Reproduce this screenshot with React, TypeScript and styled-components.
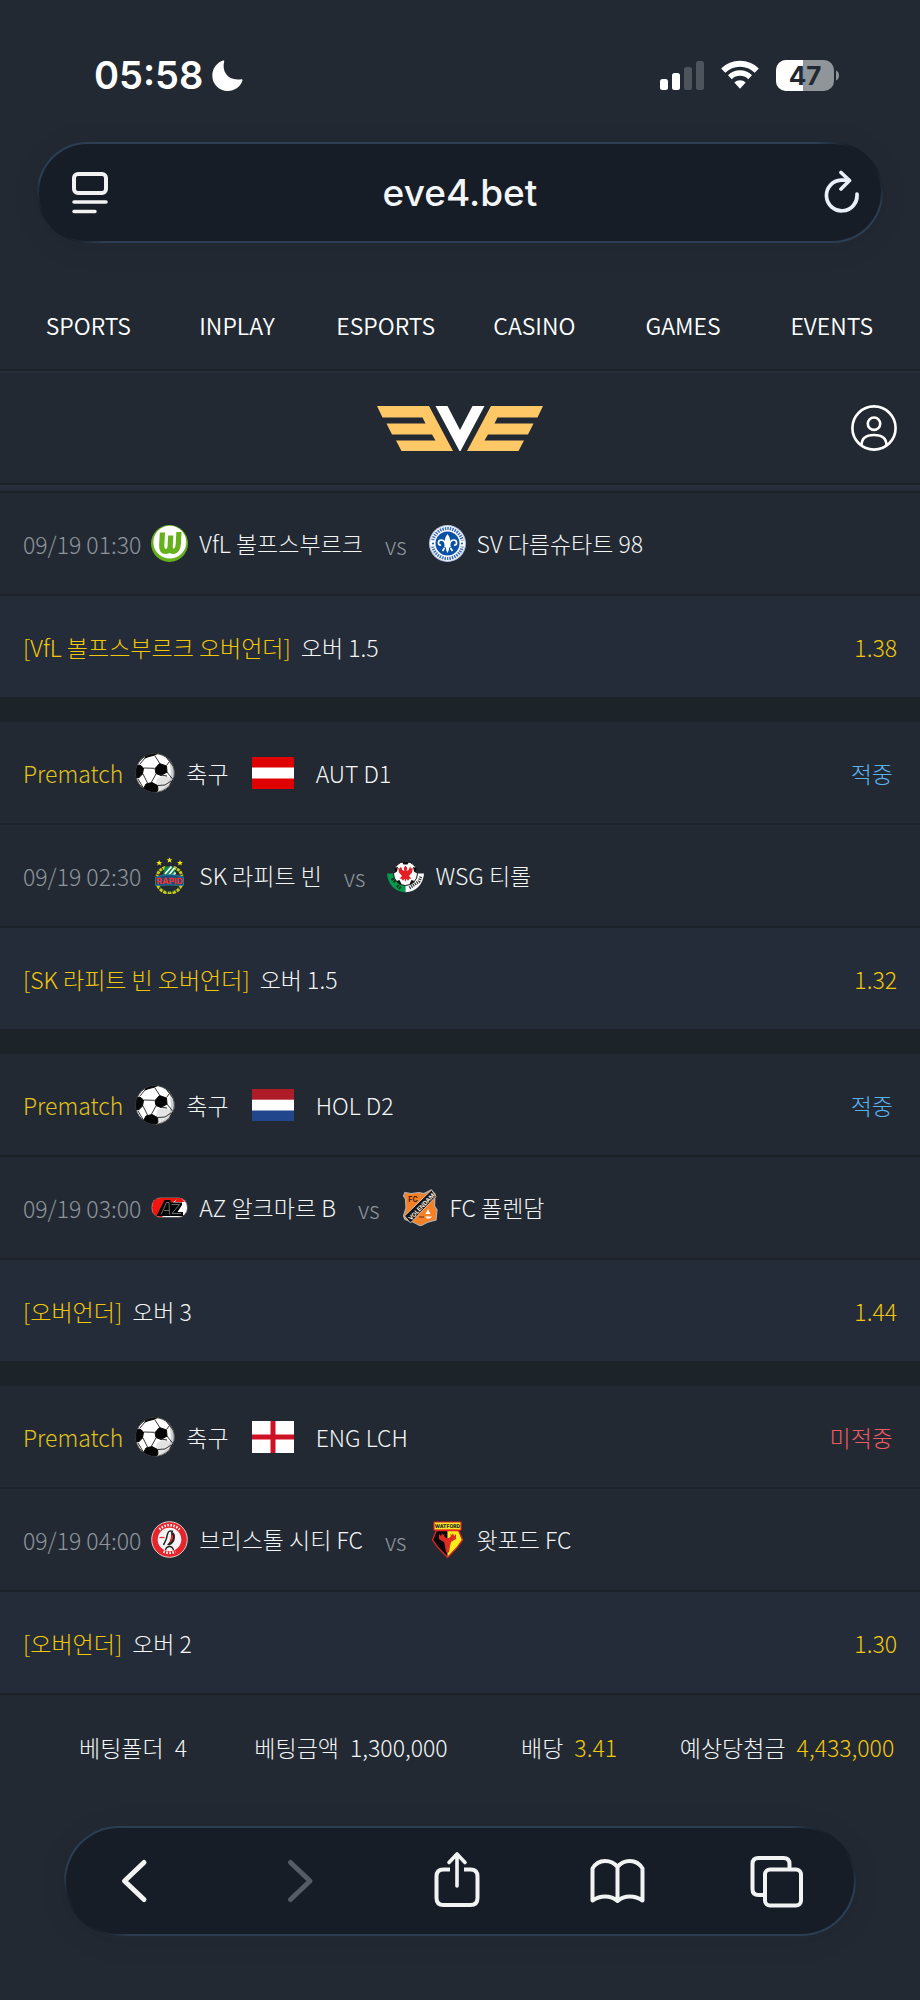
import React from 'react';
import styled, { createGlobalStyle } from 'styled-components';

const color = {
  page: '#222933',
  row: '#252c39',
  gap: '#1c2329',
  line: '#1b2228',
  glass: '#171d26',
  text: '#f4f6f6',
  dim: '#8e959b',
  gold: '#f2c806',
  prematch: '#e0c31c',
  win: '#5cb2f0',
  lose: '#f05a62',
};

const GlobalStyle = createGlobalStyle`
  * { box-sizing: border-box; }
  body {
    margin: 0;
    background: ${color.page};
    color: ${color.text};
    font-family: 'Noto Sans CJK KR', 'Noto Sans', sans-serif;
    font-weight: 300;
    font-size: 23px;
    line-height: 34px;
  }
  ul, dl, dd { margin: 0; padding: 0; list-style: none; }
  svg { display: block; flex: none; }
  button { padding: 0; border: 0; background: none; color: inherit; cursor: pointer; }
`;

const Screen = styled.div`
  display: flex;
  flex-direction: column;
`;

const StatusBar = styled.div`
  display: flex;
  align-items: center;
  height: 142px;
  padding: 8px 81px 0 94px;
  color: #fff;
  font-family: Inter, 'Liberation Sans', sans-serif;
`;

const Clock = styled.time`
  margin-right: 9px;
  font-size: 38px;
  font-weight: 600;
`;

const StatusIcons = styled.div`
  display: flex;
  align-items: center;
  gap: 17px;
  margin-left: auto;
`;

const GlassBar = styled.div<{ $inset: number; $height: number }>`
  display: flex;
  align-items: center;
  height: ${(p) => p.$height}px;
  margin: 0 ${(p) => p.$inset}px;
  border: 2px solid transparent;
  border-radius: 56px;
  background:
    linear-gradient(${color.glass}, ${color.glass}) padding-box,
    linear-gradient(45deg, ${color.glass} 24px, #2b3e53 48px, #2b3e53 calc(100% - 48px), ${color.glass} calc(100% - 24px)) border-box;
  box-shadow: 0 4px 30px rgba(20, 26, 30, 0.08);
`;

const BarButton = styled.button<{ $side: 'start' | 'end' }>`
  display: flex;
  justify-content: flex-${(p) => p.$side};
  width: 90px;
  padding: 0 22px 0 33px;
`;

const Address = styled.input`
  flex: 1;
  min-width: 0;
  padding: 0;
  border: 0;
  background: none;
  color: #f3f5f6;
  font: 500 37px/48px Inter, 'Liberation Sans', sans-serif;
  text-align: center;
`;

const MainNav = styled.nav`
  display: flex;
  align-items: center;
  height: 92px;
  margin-top: 36px;
  padding: 2px 14px 0;
  border-bottom: 2px solid ${color.line};
`;

const NavLink = styled.a`
  flex: 1;
  color: #fff;
  font-weight: 350;
  text-align: center;
  text-decoration: none;
`;

const Brand = styled.header`
  display: grid;
  grid-template-columns: 1fr auto 1fr;
  align-items: center;
  height: 114px;
  padding: 0 23px;
  border-top: 2px solid #262e3a;
  border-bottom: 2px solid ${color.line};
`;

const Account = styled.button`
  grid-column: 3;
  justify-self: end;
`;

const LogoLink = styled.a`
  grid-column: 2;
`;

const Divider = styled.div`
  height: 8px;
  border-bottom: 2px solid ${color.line};
  background: linear-gradient(#2a313e, #232a35);
`;

const Bets = styled.ul`
  display: flex;
  flex-direction: column;
  gap: 25px;
  background: ${color.gap};
`;

const Bet = styled.li`
  background: ${color.page};
`;

const Line = styled.div`
  display: flex;
  align-items: center;
  height: 103px;
  padding: 0 23px;
  border-bottom: 2px solid ${color.line};
  white-space: nowrap;
`;

const Pick = styled(Line)`
  gap: 10px;
  height: 101px;
  border-bottom: 0;
  background: ${color.row};
`;

const Prematch = styled.span`
  margin-right: 12px;
  color: ${color.prematch};
`;

const Sport = styled.span`
  margin: 0 23px 0 11px;
`;

const League = styled.span`
  margin-left: 22px;
`;

const Result = styled.span<{ $won: boolean }>`
  margin-left: auto;
  padding-right: 4px;
  color: ${(p) => (p.$won ? color.win : color.lose)};
`;

const When = styled.time`
  margin-right: 10px;
  padding-top: 1px;
  color: ${color.dim};
`;

const Team = styled.span`
  display: flex;
  align-items: center;
  gap: 11px;
`;

const Club = styled.span`
  padding-bottom: 2px;
`;

const Versus = styled.span`
  margin: 0 22px;
  padding-top: 3px;
  color: ${color.dim};
`;

const Gold = styled.span`
  color: ${color.gold};
`;

const Odds = styled(Gold)`
  margin-left: auto;
`;

const Summary = styled.dl`
  display: grid;
  grid-template-columns: repeat(4, 1fr);
  align-items: center;
  height: 105px;
  padding: 0 24px;
  border-top: 2px solid ${color.line};
`;

const Total = styled.div<{ $gold: boolean }>`
  display: flex;
  justify-content: center;
  gap: 11px;
  white-space: nowrap;
  dd { color: ${(p) => (p.$gold ? color.gold : color.text)}; }
`;

const Toolbar = styled.div`
  padding: 28px 0 64px;
`;

const Tools = styled(GlassBar)`
  justify-content: space-between;
  padding: 0 46px 0 38px;
`;

const MoonIcon = () => (
  <svg width="31" height="31" viewBox="0 0 31 31" fill="#fff" aria-hidden="true">
    <path d="M11 .5c.8-.3 1.500 .3 1.200 1.100C9.500 11.500 16 21.500 29.300 19.300c.9-.1 1.400.6 1.100 1.400C28.300 26.700 22.500 31 15.700 31 7.200 31 .3 24.200.3 15.700.3 8.700 4.700 2.600 11 .5z" />
  </svg>
);

const SignalIcon = () => (
  <svg width="44" height="30" viewBox="0 0 44 30" fill="#fff" role="img" aria-label="Signal">
    <rect x="0" y="19" width="8" height="11" rx="2.500" />
    <rect x="12" y="13" width="8" height="17" rx="2.500" />
    <g opacity=".2">
      <rect x="24" y="7" width="8" height="23" rx="2.500" />
      <rect x="36" y="1" width="8" height="29" rx="2.500" />
    </g>
  </svg>
);

const WifiIcon = () => (
  <svg width="38" height="30" viewBox="0 0 38 30" fill="none" role="img" aria-label="Wi-Fi">
    <path d="M2.200 10.700a24 24 0 0 1 33.600 0" stroke="#fff" strokeWidth="6" />
    <path d="M8.900 17.200a14.500 14.500 0 0 1 20.200 0" stroke="#fff" strokeWidth="5.500" />
    <path d="M13.300 22.500a8.500 8.500 0 0 1 11.400 0L19 28.800z" fill="#fff" />
  </svg>
);

const BatteryIcon = () => (
  <svg width="63" height="31" viewBox="0 0 63 31" role="img" aria-label="Battery">
    <clipPath id="cell"><rect width="58" height="31" rx="10" /></clipPath>
    <g clipPath="url(#cell)">
      <rect width="58" height="31" fill="#90959a" />
      <rect width="27" height="31" fill="#fff" />
    </g>
    <path d="M60 10.500c2 .8 3 2.700 3 5s-1 4.200-3 5z" fill="#90959a" />
    <text x="29" y="25" textAnchor="middle" fill={color.page} fontSize="26" fontWeight="700" fontFamily="Inter, sans-serif">47</text>
  </svg>
);

const ReaderIcon = () => (
  <svg width="36" height="42" viewBox="0 0 36 42" fill="none" stroke="#f1f2f2" strokeWidth="4" strokeLinecap="round" aria-hidden="true">
    <rect x="2" y="2" width="32" height="19" rx="4" />
    <path d="M2 30h32M2 39.500h21" strokeWidth="3.500" />
  </svg>
);

const ReloadIcon = () => (
  <svg width="35" height="46" viewBox="0 0 35 46" fill="none" stroke="#eaf0fb" strokeWidth="3.700" strokeLinecap="round" strokeLinejoin="round" aria-hidden="true">
    <path d="M24 10.200H17a15.300 15.300 0 1 0 16 14" />
    <path d="M17 2.500l8.500 8L17 19" />
  </svg>
);

const EveLogo = () => (
  <svg width="166" height="45" viewBox="0 0 166 45" role="img" aria-label="EVE">
    <g fill="#ffc866">
      <path d="M0 0h52l24 45H24.500l-5.500-10.500h39.500l-3.500-6H15L9.500 17.500h39l-3-6H5.500z" />
      <path d="M166 0h-52L90 45h51.500l5.500-10.500h-39.500l3.500-6h40l5.500-11h-39l3-6h40z" />
    </g>
    <path d="M58.500 0h12L83 24 95.500 0h12L83.500 45h-1z" fill="#fff" />
  </svg>
);

const UserIcon = () => (
  <svg width="46" height="46" viewBox="0 0 46 46" fill="none" stroke="#fff" strokeWidth="2.600" aria-hidden="true">
    <circle cx="23" cy="23" r="21.600" />
    <circle cx="23" cy="18.700" r="6.200" />
    <path d="M10.500 40.500c0-6.500 3.500-10.500 12.500-10.500s12.500 4 12.500 10.500" />
  </svg>
);

const BallIcon = () => (
  <svg width="40" height="40" viewBox="0 0 40 40" aria-hidden="true">
    <clipPath id="ball"><circle cx="20" cy="20" r="19.500" /></clipPath>
    <g clipPath="url(#ball)">
      <rect width="40" height="40" fill="#fff" />
      <path d="M28 1l12 8v31H20l10-6 6-12-1-12z" fill="#cfcfcf" />
      <path d="M22 26l8-5 5 4-2 7-8 5-4-4z" fill="#e3e3e3" />
      <g fill="#060606" stroke="#060606">
        <path d="M20 15.500l4.500-5 7 2.500.5 6-6 3.500-5-2z" />
        <path d="M0 13l5-1 3.500 3-1 6-4 4-4-1z" />
        <path d="M11 31l6-1.500 5.500 3 .5 5-4 3h-8l-3-4z" />
        <path d="M11 2l6-2.500 6 .5-3 2-6 1.500-4 1.500z" />
        <path d="M40 25l-2.500 2-2.500 5 .5 3 5-4z" />
      </g>
      <path d="M9 15l10.500.3M24.500 10L20 3M31.500 12.500l3-4-4-5.500M34.500 8.500l4 5M32 19l5.500 7M21 21l-4.500 8M26 22l6 1M8 21l4.500 9M5 11l5-6M23 32.500l7-.5 6-4M3 26l6 10" fill="none" stroke="#333" strokeWidth="1" />
    </g>
    <circle cx="20" cy="20" r="19.300" fill="none" stroke="#222" strokeWidth=".8" />
  </svg>
);

const flags: Record<string, React.ReactNode> = {
  austria: <><rect width="42" height="32" fill="#df0000" /><rect y="10.500" width="42" height="11" fill="#fff" /></>,
  netherlands: <><rect width="42" height="32" fill="#fff" /><rect width="42" height="10.700" fill="#ae1c28" /><rect y="21.500" width="42" height="10.500" fill="#21468b" /></>,
  england: <><rect width="42" height="32" fill="#fff" /><path d="M18.500 0h5v32h-5zM0 13.500h42v5H0z" fill="#ce1124" /></>,
};

const Flag = ({ name }: { name: string }) => (
  <svg width="42" height="32" viewBox="0 0 42 32" role="img" aria-label={name}>{flags[name]}</svg>
);

const laurel = [0, 1, 2, 3, 4, 5, 6];

const crests: Record<string, React.ReactNode> = {
  wolfsburg: (
    <>
      <circle cx="18.500" cy="18.500" r="18.500" fill="#65b11c" />
      <circle cx="18.800" cy="17.200" r="16.400" fill="#fff" />
      <path d="M10.800 7.500V20q0 6.500 4.500 6.500 4 0 4-5.500V10.500v10.800q0 5.200 3.500 5.200 4.500-1 4.500-7.800V7" transform="skewX(-3) translate(1 0)" fill="none" stroke="#65b11c" strokeWidth="5.200" />
    </>
  ),
  darmstadt: (
    <>
      <circle cx="18.500" cy="18.500" r="18.500" fill="#b9cbe6" />
      <circle cx="18.500" cy="18.500" r="17.200" fill="#fff" />
      <circle cx="18.500" cy="18.500" r="15" fill="none" stroke="#3c6db5" strokeWidth="3.200" strokeDasharray="1.500 1" />
      <path d="M1.500 15.500h5v6h-5zM30.500 15.500h5v6h-5z" fill="#fff" />
      <circle cx="4" cy="18.500" r="1" fill="#1450a0" /><circle cx="33" cy="18.500" r="1" fill="#1450a0" />
      <circle cx="18.500" cy="18.500" r="12" fill="#0a50a4" />
      <path d="M18.500 9q4.500 5.500 1.500 12h1.500v1.500H20q.5 3-1.500 5.500-2-2.500-1.500-5.500h-1.500V21H17Q14 14.500 18.500 9z" fill="#fff" />
      <path d="M16.500 22q0-7-4-7-3.500 0-3 3.500.5 2 2.500 1.500M20.500 22q0-7 4-7 3.500 0 3 3.500-.5 2-2.500 1.500M15.500 23l-2 3M21.500 23l2 3" fill="none" stroke="#fff" strokeWidth="1.700" />
    </>
  ),
  rapid: (
    <>
      <g fill="#f2e60a">
        {[[18.500, 3], [8.200, 5.800], [29, 5.800]].map(([x, y]) => (
          <path key={x} transform={`translate(${x} ${y})`} d="M0-2.800l.8 2 2.100.1L1.300.6l.6 2.100L0 1.500l-1.900 1.200.6-2.100L-2.900-.7l2.100-.1z" />
        ))}
      </g>
      <g fill="none" stroke="#c9cc16" strokeWidth="3">
        <path d="M14.500 10.500Q8 12 6 19M22.500 10.500Q29 12 31 19" strokeDasharray="3 .8" />
        <path d="M6.500 28Q10 36 18.500 36T30.500 28" strokeDasharray="3.500 1" />
      </g>
      {laurel.map((i) => <circle key={i} cx={9 + i * 3.200} cy={[30.500, 33, 34.500, 35, 34.500, 33, 30.500][i]} r=".8" fill="#2a6b2a" />)}
      <path d="M13.500 10.500q5-2.500 10 0l1.500 8-6.500 3-6.500-3z" fill="#0b8a4a" />
      <path d="M14 17l6.500-7.500M16.500 19.500l7-8.500M21 20l3.500-4.500" stroke="#fff" strokeWidth="1.700" />
      <path d="M4.500 20q14-5 28 0v8.500q-14-1-28 0z" fill="#174f7c" stroke="#2f86a0" strokeWidth=".8" />
      <text x="18.500" y="27.300" textAnchor="middle" textRendering="geometricPrecision" fontSize="8.500" fontWeight="800" fontFamily="Inter, sans-serif" fill="#f0312f">RAPID</text>
    </>
  ),
  tirol: (
    <>
      <path d="M0 16.500h18.500v18.700C8 35.200.6 27 0 16.500z" fill="#079a4d" />
      <path d="M37 16.500H18.500v18.700C29 35.200 36.400 27 37 16.500z" fill="#fff" />
      <circle cx="18.500" cy="16.500" r="12" fill="#fff" stroke="#111" strokeWidth="1" />
      <path d="M15 5h7l-1.500 2.500h-4zM7.500 11l3.500-1-1 4.500-3 2zM29.500 11L26 10l1 4.500 3 2zM9.500 24l3-1 2 4-2 .5zM27.500 24l-3-1-2 4 2 .5z" fill="#111" />
      <path d="M18.500 8.500l1.700 2.500-.6 3 2-1 1.500-3.500 1 2 1.700-.5-.8 4.500-3 3.500 2.500 2.500-2 .2-1.500 2-1.500-2-1 3.300-1-3.300-1.500 2-1.500-2-2-.2 2.500-2.500-3-3.500-.8-4.500 1.700.5 1-2 1.500 3.500 2 1-.6-3z" fill="#e51e25" />
      <path d="M5 21.500l3.500 4M10 28.500l3.500 3" stroke="#083b1e" strokeWidth="3" strokeDasharray="2 .8" />
      <path d="M22.500 31l9.500-6.500 2-5" fill="none" stroke="#333" strokeWidth="3" strokeDasharray="1.200 1" />
    </>
  ),
  az: (
    <>
      <rect x=".5" y="8.500" width="36" height="20" rx="9.500" fill="#fff" stroke="#444" strokeWidth=".8" />
      <path d="M10 9H27Q22 13 19 17L11 28.200Q1 28 1 18.500 1 9 10 9z" fill="#f1150f" />
      <path d="M26 9h4l4 4h-10z" fill="#f1150f" />
      <path d="M5.500 27l8-16h6v2.500H31V16l-4.500 7H32v4z" fill="#050505" />
      <path d="M10 25.500l5.500-12h2.500l.5 12M13 21.500h5M20.500 15.500h8l-7.500 9h9" fill="none" stroke="#999" strokeWidth=".7" />
    </>
  ),
  volendam: (
    <g transform="translate(1 0)">
      <path d="M2 3.500l6 1 8-1 5 1L28 1l4 4-.5 12 2.500 4-1 10-9 2.500L17.500 37 10 33l-8-2.500L.5 27 3 19 2.500 10 .5 7z" fill="#f58026" stroke="#b3b0ac" strokeWidth="1.200" />
      <path d="M28.500 1L33 7.500 7.500 34 1.500 27z" fill="#151515" stroke="#d9d2c8" strokeWidth=".9" />
      <text x="18" y="20.500" transform="rotate(-46 17.500 17.500)" textAnchor="middle" textRendering="geometricPrecision" fontSize="6" fontWeight="700" fontFamily="Inter, sans-serif" fill="#f4e8dd">VOLENDAM</text>
      <text x="10" y="12.500" textAnchor="middle" fontSize="7" fontWeight="700" fontFamily="Inter, sans-serif" fill="#3b2010">FC</text>
      <path d="M25 20l2.500 5h-5zM22 27.500h7l-2 2h-3z" fill="#fff" /><path d="M16 28h5" stroke="#3b2010" strokeWidth=".8" />
    </g>
  ),
  bristol: (
    <>
      <circle cx="18.500" cy="18.500" r="17.800" fill="#e5242b" stroke="#e8e1e1" strokeWidth=".9" />
      <circle cx="18.500" cy="18.500" r="11.800" fill="#f6f4f4" />
      <path d="M8.500 9.500A13.700 13.700 0 0 1 28.500 9.500M12.500 31.500A13.700 13.700 0 0 0 24.500 31.500" transform="translate(0 -1)" fill="none" stroke="#fff" strokeWidth="2.600" strokeDasharray="1.500 1.500" />
      <path d="M22 10.500q-4-2-5.500 2.500-.5 5-4 11" fill="none" stroke="#222" strokeWidth="1.500" />
      <path d="M20 11q4 0 4 4.500 0 7-6 9l-2-1q4-3 4-8z" fill="#222" />
      <path d="M20.500 12.500q2.500 2 1 6-1 2.500-2.500 3.500 1-5 1.500-9.500z" fill="#e5242b" />
      <path d="M8.500 16.500h5" stroke="#e5242b" strokeWidth="1.200" />
      <path d="M14.500 29q1-3.500 4-3.500t4 3.500" fill="none" stroke="#222" strokeWidth="1.300" />
    </>
  ),
  watford: (
    <>
      <path d="M5 1h27v8H5z" fill="#f4e52b" stroke="#e3231f" strokeWidth="1.200" />
      <text x="18.500" y="7" textAnchor="middle" textRendering="geometricPrecision" fontSize="5" fontWeight="800" fontFamily="Inter, sans-serif" fill="#222">WATFORD</text>
      <path d="M7.500 9.500h11V36L8.500 26 3.500 19z" fill="#090909" />
      <path d="M18.500 9.500h11l4 9.500-5 7-10 10z" fill="#f9ed1c" />
      <path d="M7.500 9.500h22l4 9.500-5 7-10 10.500L8.500 26 3.500 19z" fill="none" stroke="#e3231f" strokeWidth="1.300" />
      <path d="M17 17l3 0 2-2-1-2 2 1 1-2 1 3 2-2v5l-5 3-1 4-1 6-1.500 1-1.500-1-1-6-1-4-5-3v-5l2 2 1-3 1 2 2-1-1 2z" fill="#e02a24" />
    </>
  ),
};

const Crest = ({ club }: { club: string }) => (
  <svg width="37" height="37" viewBox="0 0 37 37" aria-hidden="true">{crests[club]}</svg>
);

const ToolIcon = ({ dim, children }: { dim?: boolean; children: React.ReactNode }) => (
  <svg width="60" height="60" viewBox="0 0 60 60" fill="none" stroke={dim ? '#575b63' : '#f2f3f3'} strokeWidth="4" strokeLinecap="round" strokeLinejoin="round" aria-hidden="true">
    {children}
  </svg>
);

const tools = [
  { label: 'Back', art: <path d="M40 11.500L20.500 30 40 48.500" strokeWidth="5" /> },
  { label: 'Forward', dim: true, art: <path d="M25.500 11.500L45 30 25.500 48.500" strokeWidth="5" /> },
  { label: 'Share', art: <><path d="M24 18.500h-6.500q-7 0-7 7V47q0 7 7 7h27q7 0 7-7V25.500q0-7-7-7H38" strokeLinecap="butt" /><path d="M31 35V4M23 11.500L31 3l8 8.500" strokeWidth="3.600" /></> },
  { label: 'Bookmarks', art: <path d="M30.500 50q-5-4.500-12.500-4.500-6.500 0-12.500 4V17.500q4.500-7.500 12.500-7.500t12.500 6q4.500-6 12.500-6t12.500 7.500v32q-6-4-12.500-4-7.500 0-12.500 4.500zM30.500 16v33" /> },
  { label: 'Tabs', art: <><path d="M41.500 18v-5q0-6-6-6h-25q-6 0-6 6v25q0 6 6 6h5" strokeLinecap="butt" /><rect x="17" y="18.500" width="36" height="36" rx="5" /></> },
];

const links = ['SPORTS', 'INPLAY', 'ESPORTS', 'CASINO', 'GAMES', 'EVENTS'];

type Match = {
  league?: string;
  flag?: string;
  won?: boolean;
  time: string;
  home: [string, string];
  away: [string, string];
  market: string;
  pick: string;
  odds: string;
};

const matches: Match[] = [
  { time: '09/19 01:30', home: ['wolfsburg', 'VfL 볼프스부르크'], away: ['darmstadt', 'SV 다름슈타트 98'], market: '[VfL 볼프스부르크 오버언더]', pick: '오버 1.5', odds: '1.38' },
  { league: 'AUT D1', flag: 'austria', won: true, time: '09/19 02:30', home: ['rapid', 'SK 라피트 빈'], away: ['tirol', 'WSG 티롤'], market: '[SK 라피트 빈 오버언더]', pick: '오버 1.5', odds: '1.32' },
  { league: 'HOL D2', flag: 'netherlands', won: true, time: '09/19 03:00', home: ['az', 'AZ 알크마르 B'], away: ['volendam', 'FC 폴렌담'], market: '[오버언더]', pick: '오버 3', odds: '1.44' },
  { league: 'ENG LCH', flag: 'england', won: false, time: '09/19 04:00', home: ['bristol', '브리스톨 시티 FC'], away: ['watford', '왓포드 FC'], market: '[오버언더]', pick: '오버 2', odds: '1.30' },
];

const totals = [
  { label: '베팅폴더', value: '4' },
  { label: '베팅금액', value: '1,300,000' },
  { label: '배당', value: '3.41', gold: true },
  { label: '예상당첨금', value: '4,433,000', gold: true },
];

const BetCard = ({ match }: { match: Match }) => (
  <Bet>
    {match.league && match.flag && (
      <Line>
        <Prematch>Prematch</Prematch>
        <BallIcon />
        <Sport>축구</Sport>
        <Flag name={match.flag} />
        <League>{match.league}</League>
        <Result $won={!!match.won}>{match.won ? '적중' : '미적중'}</Result>
      </Line>
    )}
    <Line>
      <When>{match.time}</When>
      <Team><Crest club={match.home[0]} /><Club>{match.home[1]}</Club></Team>
      <Versus>vs</Versus>
      <Team><Crest club={match.away[0]} /><Club>{match.away[1]}</Club></Team>
    </Line>
    <Pick>
      <Gold>{match.market}</Gold>
      <span>{match.pick}</span>
      <Odds>{match.odds}</Odds>
    </Pick>
  </Bet>
);

export default function App() {
  return (
    <Screen>
      <GlobalStyle />
      <StatusBar>
        <Clock>05:58</Clock>
        <MoonIcon />
        <StatusIcons>
          <SignalIcon />
          <WifiIcon />
          <BatteryIcon />
        </StatusIcons>
      </StatusBar>
      <GlassBar $inset={37} $height={101}>
        <BarButton $side="start" aria-label="Page menu"><ReaderIcon /></BarButton>
        <Address type="text" aria-label="Address" defaultValue="eve4.bet" />
        <BarButton $side="end" aria-label="Reload"><ReloadIcon /></BarButton>
      </GlassBar>
      <MainNav>
        {links.map((name) => <NavLink key={name} href={`#${name.toLowerCase()}`}>{name}</NavLink>)}
      </MainNav>
      <Brand>
        <LogoLink href="#home"><EveLogo /></LogoLink>
        <Account aria-label="Account"><UserIcon /></Account>
      </Brand>
      <Divider />
      <Bets>
        {matches.map((match) => <BetCard key={match.time} match={match} />)}
      </Bets>
      <Summary>
        {totals.map((t) => (
          <Total key={t.label} $gold={!!t.gold}>
            <dt>{t.label}</dt>
            <dd>{t.value}</dd>
          </Total>
        ))}
      </Summary>
      <Toolbar>
        <Tools $inset={64} $height={110}>
          {tools.map((tool) => (
            <button key={tool.label} aria-label={tool.label} disabled={tool.dim}>
              <ToolIcon dim={tool.dim}>{tool.art}</ToolIcon>
            </button>
          ))}
        </Tools>
      </Toolbar>
    </Screen>
  );
}
